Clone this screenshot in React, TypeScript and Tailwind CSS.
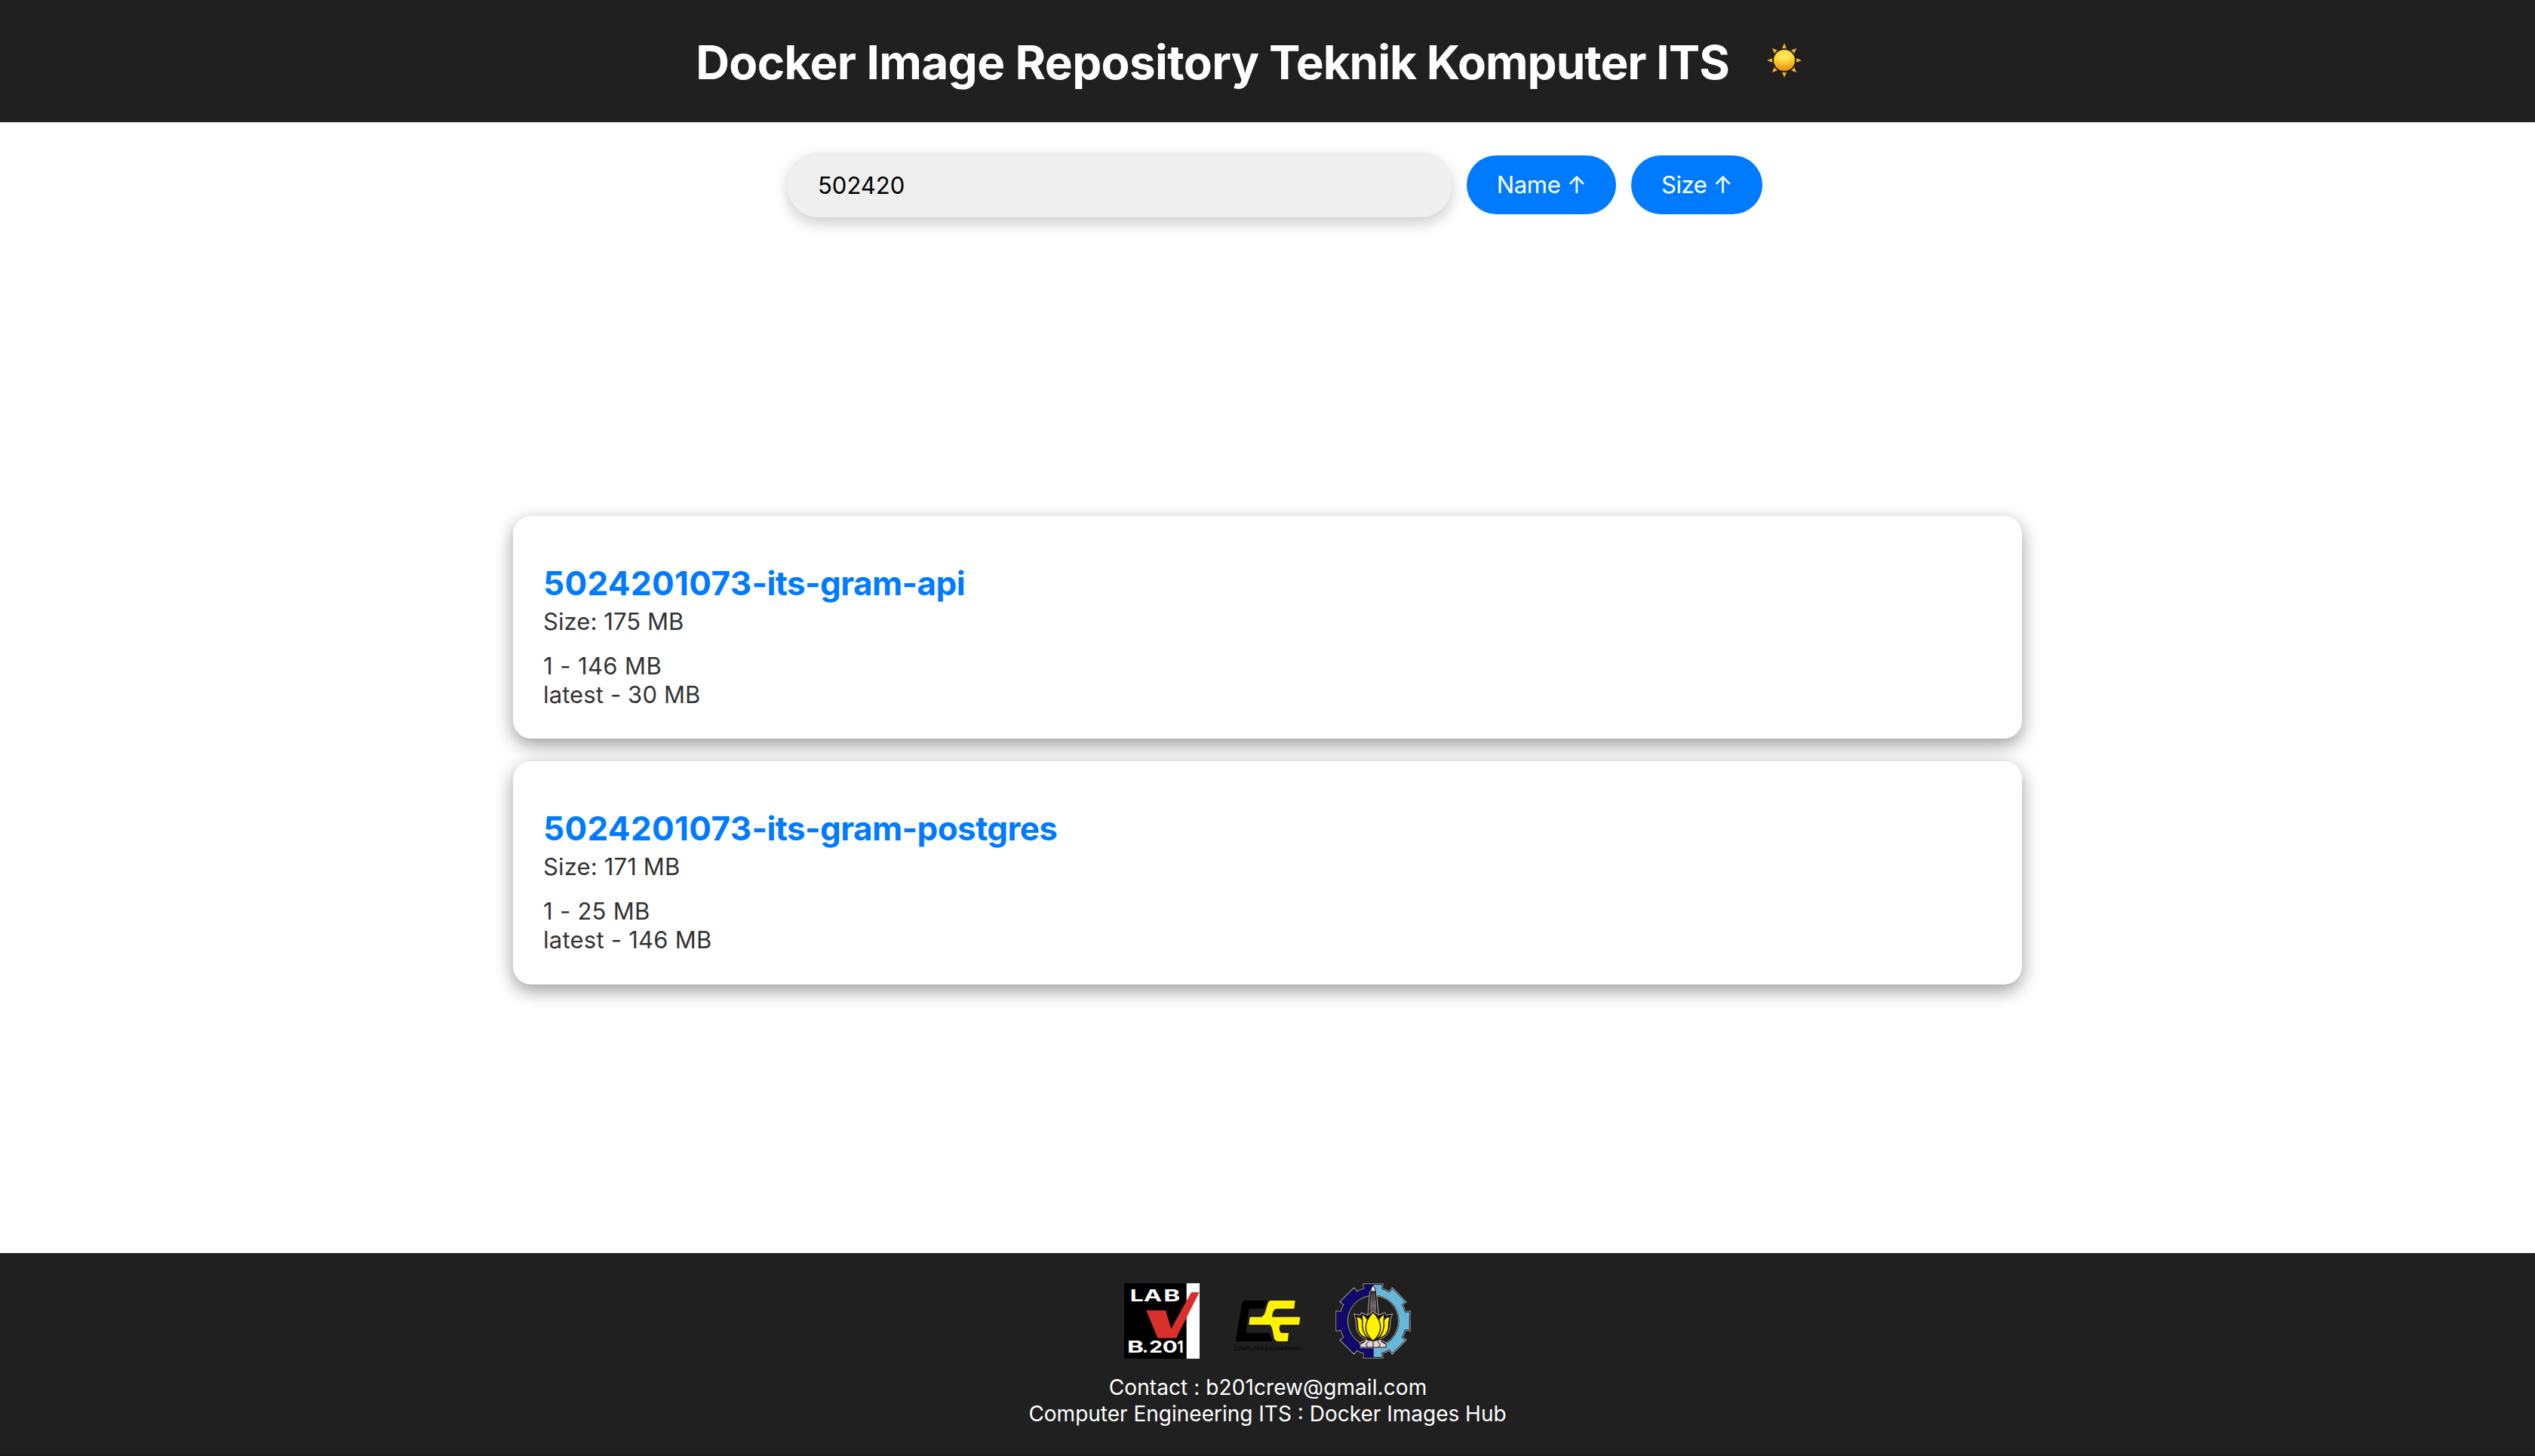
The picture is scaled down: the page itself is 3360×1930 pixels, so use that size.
import { useState } from "react";

type Tag = { label: string; tracking: string };
type Repo = { id: string; suffix: string; size: string; sizeTracking: string; tags: Tag[] };

const repos: Repo[] = [
  {
    id: "5024201073",
    suffix: "-its-gram-api",
    size: "Size: 175 MB",
    sizeTracking: "tracking-[0.07px]",
    tags: [
      { label: "1 - 146 MB", tracking: "tracking-[0.4px]" },
      { label: "latest - 30 MB", tracking: "tracking-[0.12px]" },
    ],
  },
  {
    id: "5024201073",
    suffix: "-its-gram-postgres",
    size: "Size: 171 MB",
    sizeTracking: "tracking-[0.15px]",
    tags: [
      { label: "1 - 25 MB", tracking: "tracking-[0.28px]" },
      { label: "latest - 146 MB", tracking: "tracking-[0.24px]" },
    ],
  },
];

function SunIcon() {
  return (
    <svg viewBox="-23 -23 46 46" className="h-[46px] w-[46px]">
      <defs>
        <linearGradient id="sunDisc" x1="0" y1="0" x2="0" y2="1">
          <stop offset="0" stopColor="#fbd02c" />
          <stop offset="0.35" stopColor="#fdd835" />
          <stop offset="1" stopColor="#ee8f10" />
        </linearGradient>
        <radialGradient id="sunGlow" cx="0.5" cy="0.3" r="0.5">
          <stop offset="0" stopColor="#fff06a" stopOpacity="0.8" />
          <stop offset="1" stopColor="#fff06a" stopOpacity="0" />
        </radialGradient>
      </defs>
      {[0, 45, 90, 135, 180, 225, 270, 315].map((a) => (
        <polygon key={a} points="0,-22.8 3,-15.6 0,-16.2 -3,-15.6" fill="#f8b62a" transform={`rotate(${a})`} />
      ))}
      <circle r="14" fill="url(#sunDisc)" />
      <circle r="13" fill="url(#sunGlow)" />
    </svg>
  );
}

function LabLogo() {
  return (
    <svg viewBox="30 33 300 300" className="h-[100px] w-[100px]">
      <rect x="30" y="33" width="249" height="300" fill="#000" />
      <rect x="278" y="33" width="52" height="300" fill="#fff" />
      <polygon points="118,141 195,141 217,214 297,69 329,69 237,251 163,251" fill="#d9302c" />
      <g fill="#fff" fontFamily="Inter" fontWeight="700" fontSize="66">
        <text x="53" y="106" textLength="54" lengthAdjust="spacingAndGlyphs">L</text>
        <text x="107" y="106" textLength="73" lengthAdjust="spacingAndGlyphs">A</text>
        <text x="187" y="106" textLength="66" lengthAdjust="spacingAndGlyphs">B</text>
        <text x="42" y="309" textLength="66" lengthAdjust="spacingAndGlyphs">B</text>
        <text x="102" y="309" textLength="24" lengthAdjust="spacingAndGlyphs">.</text>
        <text x="129" y="309" textLength="54" lengthAdjust="spacingAndGlyphs">2</text>
        <text x="182" y="309" textLength="60" lengthAdjust="spacingAndGlyphs">0</text>
        <text x="241" y="309" textLength="25" lengthAdjust="spacingAndGlyphs">1</text>
      </g>
    </svg>
  );
}

function ComputerEngineeringLogo() {
  return (
    <svg viewBox="30 3 300 300" className="h-[100px] w-[100px]">
      <path
        d="M92 72H178L166 104H112Q106 104 105 110L95 194Q94 201 101 201H188L200 234H60Q53 234 54 227L78 84Q80 72 92 72Z"
        fill="#000"
      />
      <path
        d="M194 72H290L286 104H216Q200 106 198 137H310L306 168H232Q225 172 228 190Q230 201 240 201H264L260 234H222Q209 233 206 220L200 190Q196 170 188 168H106L110 137H155Q166 134 171 118L181 84Q185 72 194 72Z"
        fill="#fff200"
      />
      <text
        x="47"
        y="269"
        textLength="266"
        lengthAdjust="spacingAndGlyphs"
        fill="#000"
        fontFamily="Liberation Sans"
        fontStyle="italic"
        fontSize="20"
      >
        COMPUTER ENGINEERING
      </text>
    </svg>
  );
}

/* Outline of an eight-toothed cog centred on the origin. */
function cogPath(base: number, outer: number, half: number) {
  const rotate = (x: number, y: number, a: number) =>
    `${(x * Math.cos(a) - y * Math.sin(a)).toFixed(2)} ${(x * Math.sin(a) + y * Math.cos(a)).toFixed(2)}`;
  const foot = Math.sqrt(base * base - (half - 2) ** 2);
  let d = "";
  for (let i = 0; i < 8; i++) {
    const a = (i * Math.PI) / 4;
    d += `${i ? `A${base} ${base} 0 0 1 ` : "M"}${rotate(-half + 2, -foot, a)}`;
    d += `L${rotate(-half, -outer, a)}L${rotate(half, -outer, a)}L${rotate(half - 2, -foot, a)}`;
  }
  return `${d}A${base} ${base} 0 0 1 ${rotate(-half + 2, -foot, 0)}Z`;
}

function ItsLogo() {
  const cog = cogPath(132, 145, 37);
  return (
    <svg viewBox="30 33 300 300" className="h-[100px] w-[100px]">
      <defs>
        <clipPath id="cogClip">
          <path d={cog} />
        </clipPath>
        <linearGradient id="column" x1="0" y1="0" x2="0" y2="1">
          <stop offset="0" stopColor="#3c3838" />
          <stop offset="0.5" stopColor="#8a8585" />
          <stop offset="1" stopColor="#3c3838" />
        </linearGradient>
      </defs>
      <g transform="translate(180 183)">
        <path d={cog} fill="none" stroke="#c9c1c1" strokeWidth="7" />
        <g clipPath="url(#cogClip)">
          <rect x="-150" y="-150" width="151" height="300" fill="#10086e" />
          <rect x="1" y="-150" width="150" height="300" fill="#68b7db" />
        </g>
        <path d={cog} fill="none" stroke="#151010" strokeWidth="3" />
        <circle r="104" fill="#151010" />
        <circle r="101" fill="#202020" stroke="#c9c1c1" strokeWidth="2.5" />
      </g>
      <path d="M167 66H193L203 175H157Z" fill="#202020" stroke="#b9b1b1" strokeWidth="3" />
      <path d="M170 68H190L196 175H164Z" fill="url(#column)" stroke="#151010" strokeWidth="3" />
      <path d="M180 70V170M175 90L173 170M185 90L187 170" stroke="#262222" strokeWidth="1.5" />
      <path d="M171 66V54L180 42L189 54V66Z" fill="#ddd6d6" stroke="#151010" strokeWidth="3" />
      <path
        d="M103 155L128 160L133 150L158 160L180 145L202 160L227 150L232 160L257 155Q248 170 247 205Q244 244 205 255L232 270V290H128V270L155 255Q116 244 113 205Q112 170 103 155Z"
        fill="#151010"
        stroke="#c9c1c1"
        strokeWidth="3"
      />
      <g fill="#fff200" stroke="#151010" strokeWidth="4" strokeLinejoin="round">
        <path d="M112 166Q136 166 141 190Q146 232 166 252Q124 248 119 210Q118 180 112 166Z" />
        <path d="M248 166Q224 166 219 190Q214 232 194 252Q236 248 241 210Q242 180 248 166Z" />
        <path d="M134 156Q156 162 161 190L176 260Q142 246 137 205Q138 172 134 156Z" />
        <path d="M226 156Q204 162 199 190L184 260Q218 246 223 205Q222 172 226 156Z" />
        <path d="M180 148C140 190 142 230 180 263C218 230 220 190 180 148Z" />
      </g>
      <path
        d="M150 256L180 263L210 256L214 266L232 276V288H128V276L146 266Z"
        fill="#ded8d8"
        stroke="#151010"
        strokeWidth="3"
      />
      <path
        d="M163 262L152 276L158 288M197 262L208 276L202 288M180 264V288"
        fill="none"
        stroke="#151010"
        strokeWidth="3"
      />
      <path d="M180.500 290V328" stroke="#151010" strokeWidth="2.500" />
    </svg>
  );
}

function SortButton({ label, className }: { label: string; className: string }) {
  return (
    <button className={`h-[78px] rounded-full bg-[#007bff] text-center text-[31px] text-white ${className}`}>
      {label}
    </button>
  );
}

function RepoCard({ repo }: { repo: Repo }) {
  return (
    <article className="h-[295.5px] w-[2000px] rounded-[24px] bg-white px-10 pt-[63px] text-[31px] leading-[38px] text-[#333] shadow-[0_8px_24px_rgba(0,0,0,0.4)]">
      <h2 className="text-[44px] leading-[52px] font-bold text-[#007bff]">
        <span className="tracking-[0.34px]">{repo.id}</span>
        <span className="tracking-[-0.58px]">{repo.suffix}</span>
      </h2>
      <p className={`mt-1.5 ${repo.sizeTracking}`}>{repo.size}</p>
      <ul className="mt-[21px]">
        {repo.tags.map((tag) => (
          <li key={tag.label} className={tag.tracking}>
            {tag.label}
          </li>
        ))}
      </ul>
    </article>
  );
}

export default function App() {
  const [query, setQuery] = useState("502420");
  return (
    <div className="flex h-[1930px] w-[3360px] flex-col overflow-hidden bg-white font-['Inter',sans-serif]">
      <header className="flex h-[162px] items-center justify-center border-b border-[#181818] bg-[#202020]">
        <h1 className="pt-1 pl-px text-[62px] leading-[76px] font-bold whitespace-nowrap text-white">
          <span className="tracking-[-0.63px]">Docker Image Repository</span>
          <span className="tracking-[-0.98px]"> Teknik Komputer ITS</span>
        </h1>
        <button aria-label="Toggle theme" className="flex w-[147px] justify-center pb-0.5">
          <SunIcon />
        </button>
      </header>

      <div className="ml-5 flex items-center justify-center gap-5 pt-10">
        <input
          value={query}
          onChange={(e) => setQuery(e.target.value)}
          className="h-[86px] w-[880px] rounded-[40px] bg-[#efefef] px-10 pt-px text-[31px] text-black shadow-[0_8px_20px_rgba(0,0,0,0.2)] outline-none"
        />
        <SortButton label="Name ↑" className="w-[198px] pt-px tracking-[-0.34px]" />
        <SortButton label="Size ↑" className="w-[174px] pt-px tracking-[-0.47px]" />
      </div>

      <main className="flex flex-1 flex-col items-center justify-center gap-[30px] pt-[39.5px]">
        {repos.map((repo) => (
          <RepoCard key={repo.suffix} repo={repo} />
        ))}
      </main>

      <footer className="flex h-[269px] flex-col items-center border-b-2 border-[#1a1717] bg-[#202020] pt-10 text-[28px] leading-[35px] text-white">
        <div className="flex gap-10">
          <LabLogo />
          <ComputerEngineeringLogo />
          <ItsLogo />
        </div>
        <p className="mt-[21px] pl-px tracking-[0.08px]">Contact : b201crew@gmail.com</p>
        <p>Computer Engineering ITS : Docker Images Hub</p>
      </footer>
    </div>
  );
}
